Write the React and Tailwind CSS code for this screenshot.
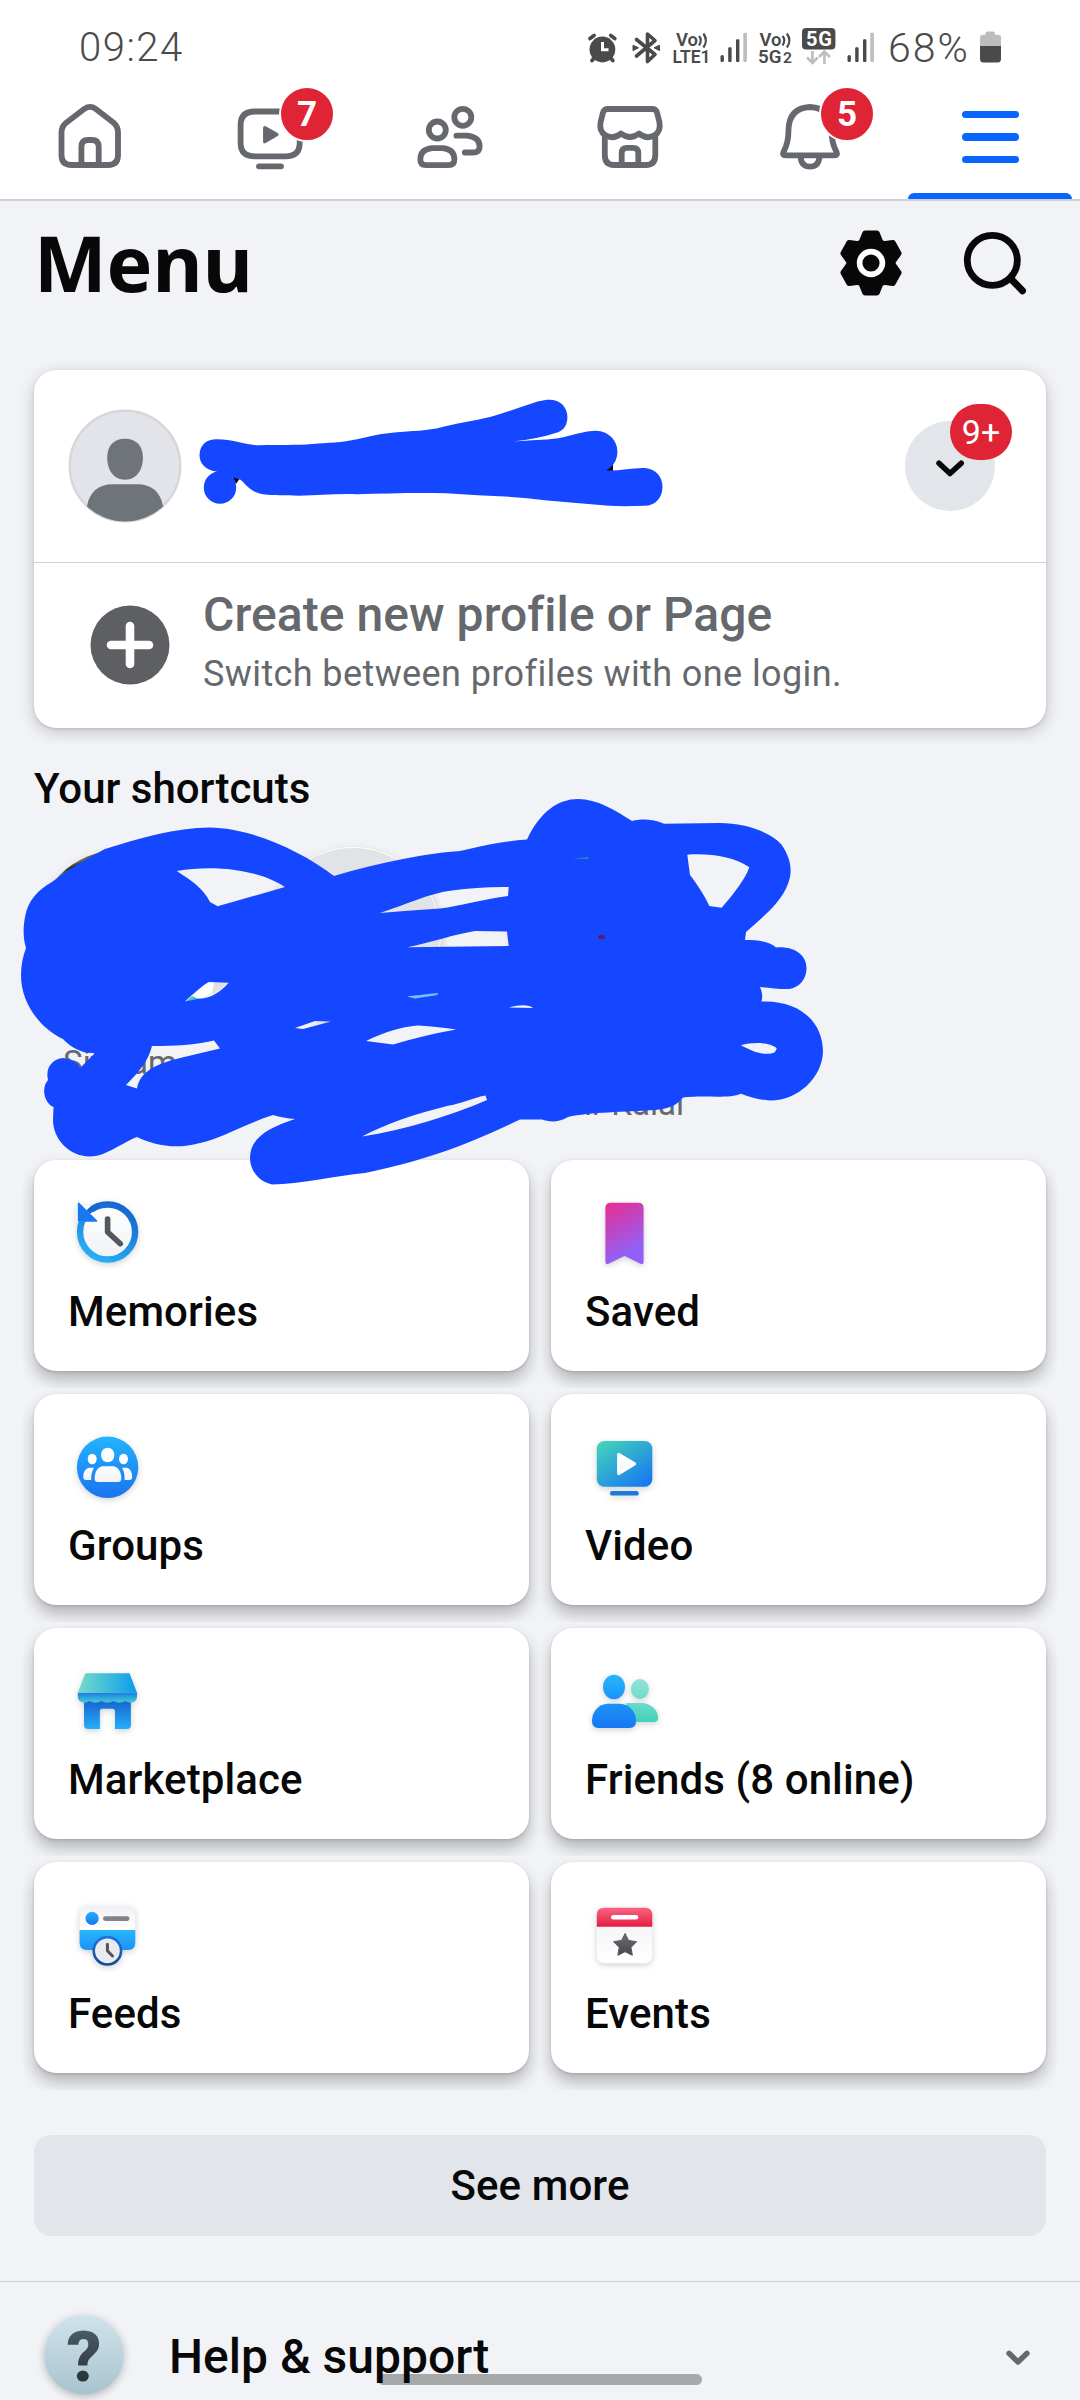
import React from "react";

const GRAY = "#65686c";
const INK = "#080809";
const MARKER = "#1447ff";

/* Status bar */

function StatusText({ x, y, size, weight = 600, width, children }) {
  return (
    <text
      x={x}
      y={y}
      fontFamily="Roboto, sans-serif"
      fontSize={size}
      fontWeight={weight}
      textLength={width}
      lengthAdjust="spacingAndGlyphs"
      fill="#4a4a4a"
    >
      {children}
    </text>
  );
}

function Signal({ x }) {
  return (
    <svg width="30" height="44" viewBox={`${x} 24 30 44`}>
      <g fill="#4a4a4a">
        <rect x={x + 1.5} y="55" width="3.4" height="7" rx="1.5" />
        <rect x={x + 9.2} y="47.3" width="3.4" height="14.7" rx="1" />
        <rect x={x + 17} y="39.3" width="3.4" height="22.7" rx="1" />
      </g>
      <rect x={x + 24.3} y="32.7" width="3.6" height="29.3" rx="1" fill="#bdbdbd" />
    </svg>
  );
}

function VoWaves({ x }) {
  return (
    <g fill="none" stroke="#4a4a4a" strokeWidth="2.2">
      <path d={`M${x} 36 Q${x + 3.6} 40 ${x} 45.5`} />
      <path d={`M${x + 4.4} 33.5 Q${x + 9.4} 40.5 ${x + 4.4} 47.5`} />
    </g>
  );
}

function StatusBar() {
  return (
    <div className="flex h-[68px] items-start justify-between pt-6 pr-[77px] pl-[79px]">
      <div className="mt-[2px] text-[40px] leading-[44px] tracking-[1.5px] text-[#4a4a4a] font-[350]">09:24</div>
      <div className="flex items-start">
        <svg width="42" height="44" viewBox="584 24 42 44">
          <circle cx="602.4" cy="49.5" r="12.9" fill="#4a4a4a" />
          <g stroke="#4a4a4a" strokeWidth="3.8" strokeLinecap="round">
            <path d="M590 38.5 L594 35.5 M614.8 38.5 L610.8 35.5" />
            <path d="M592 60.5 L595 57 M612.8 60.5 L609.8 57" />
          </g>
          <path d="M602.5 42 V49.8 H608.5" fill="none" stroke="#fff" strokeWidth="3" />
        </svg>
        <svg width="42" height="44" viewBox="626 24 42 44">
          <path
            d="M636.5 39.5 L655 54.5 L647.5 61.5 V34 L655 40.5 L636.5 56"
            fill="none"
            stroke="#4a4a4a"
            strokeWidth="3.6"
            strokeLinejoin="round"
            strokeLinecap="round"
          />
          <path d="M633 45.2 L638.5 47.8 L633 50.6 Z M659.5 45.2 L654 47.8 L659.5 50.6 Z" fill="#4a4a4a" stroke="#4a4a4a" />
        </svg>
        <svg width="51" height="44" viewBox="668 24 51 44">
          <StatusText x="676" y="46" size="18" width="22">Vo</StatusText>
          <VoWaves x={699} />
          <StatusText x="672.5" y="63.3" size="18.5" width="38">LTE1</StatusText>
        </svg>
        <Signal x={719} />
        <svg width="49" height="44" viewBox="749 24 49 44">
          <StatusText x="759.5" y="46" size="18" width="22">Vo</StatusText>
          <VoWaves x={782.5} />
          <StatusText x="758" y="63.3" size="18.5" width="23.5">5G</StatusText>
          <StatusText x="783" y="63.3" size="14.5" width="9">2</StatusText>
        </svg>
        <svg width="48" height="44" viewBox="798 24 48 44">
          <rect x="802" y="28" width="33.4" height="21.6" rx="4" fill="#4a4a4a" />
          <text x="806" y="45.6" fontFamily="Roboto, sans-serif" fontSize="20" fontWeight="700" fill="#fff" textLength="26">
            5G
          </text>
          <g fill="none" stroke="#bdbdbd" strokeWidth="2.6">
            <path d="M812.4 51 V62.5 M807 57.5 L812.4 63 L817.8 57.5" />
            <path d="M824.4 64 V52 M819 57 L824.4 51.6 L829.8 57" />
          </g>
        </svg>
        <Signal x={846.4} />
        <div className="mt-[2px] ml-3 w-[91px] text-[41px] leading-[44px] tracking-[2px] whitespace-nowrap text-[#4a4a4a] font-[350]">68%</div>
        <svg width="24" height="44" viewBox="979 24 24 44">
          <rect x="985.5" y="31.5" width="9.5" height="6" rx="2" fill="#bdbdbd" />
          <path d="M980 46 V38 Q980 34.7 983 34.7 H998 Q1001 34.7 1001 38 V46 Z" fill="#bdbdbd" />
          <path d="M980 46 H1001 V59 Q1001 62.5 997.5 62.5 H983.5 Q980 62.5 980 59 Z" fill="#4a4a4a" />
        </svg>
      </div>
    </div>
  );
}

/* Tab bar */

const HomeIcon = (
  <>
    <path d="M84.5 108.8 Q90 105 95.500 108.800 L113.300 122.500 Q118 126.300 118 132.500 V155 Q118 165 108 165 H71.500 Q61.500 165 61.500 155 V132.500 Q61.500 126.300 66.500 122.500 Z" />
    <path d="M81.400 165 V147 Q81.400 140 88 140 H92 Q98.700 140 98.700 147 V165" />
  </>
);

const VideoIcon = (
  <>
    <path d="M255 111.500 H285.500 Q299.700 111.500 299.700 125 V143 Q299.700 156.400 285.500 156.400 H255 Q240.600 156.400 240.600 143 V125 Q240.600 111.500 255 111.500 Z" />
    <path d="M259 166.300 H281" />
    <path d="M264.800 127.700 L276.800 134.500 L264.800 141.500 Z" fill={GRAY} strokeWidth="3.500" />
  </>
);

const FriendsIcon = (
  <>
    <circle cx="437.300" cy="130" r="8.500" />
    <circle cx="462.800" cy="117.300" r="8.500" />
    <path d="M432 148.200 H443 Q454.400 149.500 454.400 159.500 Q454.400 165.200 448.500 165.200 H426 Q420.300 165.200 420.300 159.500 Q420.300 149.500 432 148.200 Z" />
    <path d="M456.400 135.700 H467 Q479.600 137 479.600 146.500 Q479.600 152.500 473.500 152.500 H464.800" />
  </>
);

const StoreIcon = (
  <>
    <path d="M608 109 H652 Q656 109 657 112.500 L659.400 122 Q661 131 655 135 Q646.500 140 639 133.500 Q630 140.500 621 133.500 Q613.500 140 605 135 Q599 131 600.600 122 L603 112.500 Q604 109 608 109 Z" />
    <path d="M604.800 136 V155 Q604.800 165 614 165 H646 Q655.300 165 655.300 155 V136" />
    <path d="M621.700 165 V153 Q621.700 147.800 627 147.800 H633 Q638.300 147.800 638.300 153 V165" />
  </>
);

const BellIcon = (
  <>
    <path d="M810 107 Q789 108 788.500 130 Q788.500 143 783.500 152 Q782 155.300 785.500 155.300 H834.500 Q838 155.300 836.500 152 Q831.500 143 831.500 130 Q831 108 810 107 Z" />
    <path d="M800.500 157 Q801.500 166.700 810 166.700 Q818.500 166.700 819.500 157" />
  </>
);

const TABS = [
  { name: "Home", x: 90, icon: HomeIcon },
  { name: "Video", x: 270, icon: VideoIcon, badge: "7" },
  { name: "Friends", x: 450, icon: FriendsIcon },
  { name: "Marketplace", x: 630, icon: StoreIcon },
  { name: "Notifications", x: 810, icon: BellIcon, badge: "5" },
];

function TabBar() {
  return (
    <nav className="grid h-[133px] grid-cols-6 border-b-2 border-[#ced0d4]">
      {TABS.map((tab) => (
        <button key={tab.name} aria-label={tab.name} className="relative flex justify-center pt-6">
          <svg
            width="90"
            height="90"
            viewBox={`${tab.x - 45} 92 90 90`}
            fill="none"
            stroke={GRAY}
            strokeWidth="5.8"
            strokeLinecap="round"
            strokeLinejoin="round"
          >
            {tab.icon}
          </svg>
          {tab.badge && (
            <span className="absolute top-[18px] left-[99px] flex size-[56px] items-center justify-center rounded-full border-2 border-white bg-[#df2435] text-[35px] leading-none font-bold text-white">
              {tab.badge}
            </span>
          )}
        </button>
      ))}
      <button aria-label="Menu" className="flex flex-col items-center justify-between pt-[42.5px]">
        <span className="flex flex-col gap-[15.3px]">
          <span className="h-[7.4px] w-[57px] rounded-full bg-[#0866ff]" />
          <span className="h-[7.4px] w-[57px] rounded-full bg-[#0866ff]" />
          <span className="h-[7.4px] w-[57px] rounded-full bg-[#0866ff]" />
        </span>
        <span className="h-1.5 w-[164px] rounded-t-md bg-[#0866ff]" />
      </button>
    </nav>
  );
}

/* Page title */

const GEAR_POINTS = [0, 60, 120, 180, 240, 300]
  .flatMap((deg) => {
    const a = (deg * Math.PI) / 180;
    return [
      [-10, -20.8],
      [-6.2, -29.8],
      [6.2, -29.8],
      [10, -20.8],
    ].map(([x, y]) => `${((x * Math.cos(a) - y * Math.sin(a)) * 0.96).toFixed(2)},${(x * Math.sin(a) + y * Math.cos(a)).toFixed(2)}`);
  })
  .join(" ");

function TitleRow() {
  return (
    <div className="flex h-[169px] items-start justify-between pt-[22px] pr-[50px] pl-[34px]">
      <h1 className="font-['Noto_Sans'] text-[77px] leading-[80px] font-bold text-[#080809]">Menu</h1>
      <div className="mt-[6px] flex gap-[56px]">
        <svg width="66" height="68" viewBox="-33 -34 66 68">
          <polygon points={GEAR_POINTS} fill={INK} stroke={INK} strokeWidth="5.600" strokeLinejoin="round" />
          <circle r="11.400" fill="none" stroke="#fff" strokeWidth="5.600" />
        </svg>
        <svg width="70" height="68" viewBox="960 229 70 68" fill="none" stroke={INK} strokeLinecap="round">
          <circle cx="992.300" cy="260.300" r="25" strokeWidth="6.800" />
          <path d="M1012 280 L1022.500 290.700" strokeWidth="7" />
        </svg>
      </div>
    </div>
  );
}

/* Profile card */

function ProfileScribble() {
  return (
    <svg width="480" height="124" viewBox="190 394 480 124">
      <path d="M232 476 L240 478 L236 484 Z M596 464 H613 V472 H598 Z" fill="#0b0b0d" />
      <ellipse cx="220" cy="487.500" rx="16.200" ry="16.300" fill={MARKER} />
      <path
        fill={MARKER}
        d="M199.500 455 C200 444 207 439.300 216.500 439.300 C232 439 244 445 259 445.300 C280 444.500 296 445.500 312.500 444 C328 443 342 442.500 357 439.300 C368 437 377 434.500 388 433.300 C405 431 421 431.500 437.500 428.300 C456 423 473 421 491 416.700 C504 413 515 409 527 405 C536 402 543 399.500 550.400 399.700 C561 400 567.400 408 567.400 416.700 C567.400 425 564 430 558 432.300 C544 437 529 440 513 441.500 C529 440 544 440.500 558 438.300 C572 435.500 585 430.500 597 430.700 C610 432 617.400 441 617.400 451.700 C617.400 460 613 467 606 470.500 C620 471 633 467.500 645 468 C656 469 662.500 477 662.500 486.700 C662.500 498 655 505.700 645 505.700 C633 506 621 506.500 609 505.700 C581 503.500 554 501.500 527 498.300 C500 495.500 473 495.500 446 493.300 C416 492.500 387 493.500 357 494.300 C337 493.500 318 495.500 299 495.700 C285 495.500 275 495.500 263 494.300 C251 492 246 485 241 480 L232 477 L216 471.500 C206 470 199.500 464 199.500 455 Z"
      />
    </svg>
  );
}

function ProfileCard() {
  return (
    <section className="mx-[34px] h-[358px] rounded-[22px] bg-white shadow-[0_4px_16px_rgba(0,0,0,0.2),0_1px_3px_rgba(0,0,0,0.12)]">
      <div className="flex h-[193px] items-center border-b border-[#ced0d4] pl-[34px]">
        <svg width="114" height="114" viewBox="67.500 409 114 114">
          <clipPath id="avatar">
            <circle cx="124.500" cy="466" r="55.500" />
          </clipPath>
          <circle cx="124.500" cy="466" r="55.200" fill="#e2e4e9" stroke="#d6d7da" strokeWidth="2.500" />
          <g clipPath="url(#avatar)" fill="#6f7478">
            <path d="M124.500 438.700 C136 438.700 142.400 446 142.400 457.500 C142.400 470 136 479.700 124.500 479.700 C113 479.700 106.700 470 106.700 457.500 C106.700 446 113 438.700 124.500 438.700 Z" />
            <path d="M86.500 506 C89 492 98 484.300 112 484.300 H137 C151 484.300 160 492 162.500 506 V524 H86.500 Z" />
          </g>
        </svg>
        <div className="mt-[-20px] ml-2">
          <ProfileScribble />
        </div>
        <button aria-label="Switch profile" className="relative ml-[235px] flex size-[90px] items-center justify-center rounded-full bg-[#e2e5e9]">
          <svg width="34" height="22" viewBox="933 457 34 22" fill="none" stroke={INK} strokeWidth="5.500" strokeLinecap="round" strokeLinejoin="round" className="mt-1">
            <path d="M939 463.200 L950 473.600 L961.200 463.200" />
          </svg>
          <span className="absolute top-[-17px] left-[45px] flex h-14 w-[62px] items-center justify-center rounded-full bg-[#df2435] text-[34px] leading-none text-white">
            9+
          </span>
        </button>
      </div>
      <div className="flex h-[165px] pl-[56px]">
        <svg width="80" height="80" viewBox="-40 -40 80 80" className="mt-[42px]">
          <circle r="39.500" fill="#5d5f63" />
          <path d="M-19 0 H19 M0 -19 V19" stroke="#fff" strokeWidth="8.600" strokeLinecap="round" />
        </svg>
        <div className="mt-[23px] ml-[33px]">
          <div className="text-[48px] leading-[58px] font-medium tracking-[0.05px] whitespace-nowrap text-[#65686c]">Create new profile or Page</div>
          <div className="mt-[8px] text-[36px] leading-[44px] tracking-[0.4px] whitespace-nowrap text-[#65686c]">Switch between profiles with one login.</div>
        </div>
      </div>
    </section>
  );
}

/* Shortcuts */

function ShortcutsScribble() {
  return (
    <svg width="820" height="400" viewBox="10 790 820 400" className="pointer-events-none absolute top-[-40px] left-[10px] z-10">
      <path d="M185 1002 L209 982 H229 L200 999 Z" fill="#fff" />
      <path d="M214 982 H229 L212 995 Z" fill="#dfe0e5" />
      <path d="M184 1003 L192 996 L199 999 Z" fill="#3fc8c8" />
      <path d="M406 997 L438 992.500 L437 995 L415 999 Z" fill="#6fc4f2" />
      <path
        fill={MARKER}
        fillRule="evenodd"
        d="M52 882 C75 865 90 857 105 849 C140 838 175 828 210 827.500 C250 828 300 850 334 876 C380 862 430 853 460 851 C485 845 505 841 527 839.500 C540 812 558 799 578 799 C597 799 615 810 632 821 C642 818.500 653 819 664 823.700 L720 823 C745 823 770 832 781 844 C789 855 792 866 790 877 C785 900 765 915 746 932 L745 940 C757 940 769 941 776 947.500 C794 946 806.500 955 806.500 968 C806.500 981 797 989 787 989 C777 989 769 987.500 760 987 C762 992 763 996 761.500 1001.500 C800 1000 823 1022 823 1052 C822 1077 799 1100.500 770 1100.500 C760 1100 750 1097 741 1093.700 C730 1099 705 1095 683 1097.500 C676 1106 668 1109 655 1110 C625 1112 590 1112 568 1117 C555 1124 548 1121 542 1119.500 H520 C500 1129 480 1138 460 1145.700 C430 1157 395 1167 365 1173 C335 1176 300 1184 272 1184.500 C257 1181 250 1169 250 1158 C250 1138 268 1128 295 1119 C287 1118.500 280 1117 273 1115 C245 1124 220 1139 200 1143 C175 1150 154 1145 137 1137 C124 1142 111 1152 98 1155.500 C73 1161 53 1141 53 1120 L53.500 1107 C44 1103 41 1088 48 1080 C45 1067 53 1059 63 1058 C71 1059 77 1062 80 1068 L95 1053 C82 1054 70 1047 63 1039 C43 1030 21 1006 21 975 C21 965 23 956 26 948 C23 938 23 928 25 917 C28 900 38 890 52 882 Z
        M176.700 871 C215 864 260 870 285 887 L217.600 906.300 L210 902 C203 888 192 881 176.700 871 Z
        M380 913 C405 905 430 893 452 890.500 Q480 886.500 508.700 887 L508 896 C480 900 460 906 440 908.500 Q410 910.500 380 913 Z
        M407 947.300 C430 943 455 934 475 931 L507 931.500 L508.700 946 Z
        M185 1001.500 C194 993 203 985 209 982 L228.700 982.700 C219 994 207 999 200 998.500 Z
        M407 996.500 L438 993 L437 995 L415 998.500 Z
        M295 1028 L315 1021 L331 1021.500 L303 1029 Z
        M366 1041 C385 1032 400 1027 418 1025.500 Q440 1027 456 1029.500 Q425 1035 393 1044.500 Z
        M508.700 1007.500 Q527 1003 533 1008 Z
        M152 1046 C175 1046 195 1045 214 1040.500 L220 1048.500 L180 1058 C155 1064 140 1072 137 1088.500 L126 1085 C138 1073 148 1062 152 1046 Z
        M362 1136.500 C385 1124 415 1114 448 1105.700 C460 1104 472 1098 485.500 1095.500 L487 1100 C450 1116 405 1130 362 1136.500 Z
        M687.300 854.700 C710 853 735 857 749.300 867.300 C745 880 732 896 721.700 907.700 L709.300 906 C705 896 697 884 690 875 Z
        M741 1045.300 C752 1042 769 1042 776.700 1048 Q776 1053 771 1053.600 C759 1055 750 1050 741 1045.300 Z"
      />
      <path d="M572 858.500 L588 857 L589 859 Z" fill="#2a8f9c" />
      <ellipse cx="601.500" cy="937" rx="3.400" ry="2.200" fill="#5a1a6a" />
    </svg>
  );
}

function Shortcuts() {
  return (
    <section className="relative h-[324px]">
      <div className="flex gap-[57px] pt-[17px] pl-[32px]">
        <div className="w-[176px] text-center">
          <div className="mx-auto mt-[3px] size-[170px] rounded-full bg-[repeating-linear-gradient(160deg,#4b4a36_0px,#6d6a50_4px,#2c2d22_7px,#5b7f96_11px)] shadow-[0_4px_10px_rgba(0,0,0,0.2)]" />
          <div className="mt-[22px] text-[33px] leading-[41px] text-[#65686c]">Sitaram</div>
        </div>
        <div className="size-[176px] rounded-full border border-white bg-[#e2e3e7] shadow-[0_4px_10px_rgba(0,0,0,0.22)]" />
        <div className="ml-3 w-[174px]">
          <div className="mx-auto size-[172px] rounded-full bg-[#3d3d40] shadow-[0_4px_10px_rgba(0,0,0,0.15)]" />
          <div className="mt-[64px] text-right text-[33px] leading-[41px] text-[#65686c]">ir Kalal</div>
        </div>
      </div>
      <ShortcutsScribble />
    </section>
  );
}

/* Menu tiles */

function Gradients() {
  const stops = (a, b) => (
    <>
      <stop offset="0" stopColor={a} />
      <stop offset="1" stopColor={b} />
    </>
  );
  return (
    <svg width="0" height="0" className="absolute">
      <linearGradient id="ring" x1="0.700" y1="0" x2="0.200" y2="1">{stops("#1766cf", "#27b3f8")}</linearGradient>
      <linearGradient id="sky" x1="0" y1="0" x2="0" y2="1">{stops("#24b3fd", "#1a73f0")}</linearGradient>
      <linearGradient id="skyLight" x1="0" y1="0" x2="0" y2="1">{stops("#28b7fb", "#1c92fb")}</linearGradient>
      <linearGradient id="skyDeep" x1="0" y1="0" x2="0" y2="1">{stops("#1c92fb", "#1877f2")}</linearGradient>
      <linearGradient id="paper" x1="0" y1="0" x2="0" y2="1">{stops("#ffffff", "#f0f2f5")}</linearGradient>
      <linearGradient id="paperUp" x1="0" y1="0" x2="0" y2="1">{stops("#f0f1f4", "#ffffff")}</linearGradient>
      <linearGradient id="bookmark" x1="0.200" y1="0" x2="0.500" y2="0.850">{stops("#e42f96", "#9360f7")}</linearGradient>
      <linearGradient id="screen" x1="0" y1="0" x2="0.850" y2="1">{stops("#45d8b8", "#1877f2")}</linearGradient>
      <linearGradient id="roof" x1="0" y1="0" x2="1" y2="0">{stops("#76dccb", "#0a9cea")}</linearGradient>
      <linearGradient id="valance" x1="0" y1="0" x2="0" y2="1">{stops("#1b7be4", "#43cdd0")}</linearGradient>
      <linearGradient id="wall" x1="0" y1="0" x2="0" y2="1">{stops("#1763d0", "#25aef9")}</linearGradient>
      <linearGradient id="mintLight" x1="0" y1="0" x2="0" y2="1">{stops("#95e3d6", "#6ddcc9")}</linearGradient>
      <linearGradient id="mint" x1="0" y1="0" x2="0" y2="1">{stops("#6bdac8", "#42d1b9")}</linearGradient>
      <linearGradient id="red" x1="0" y1="0" x2="0" y2="1">{stops("#fb6482", "#e41e42")}</linearGradient>
      <linearGradient id="graphite" x1="0" y1="0" x2="0" y2="1">{stops("#6c6e73", "#45474b")}</linearGradient>
      <linearGradient id="clockRing" x1="0" y1="0" x2="0" y2="1">{stops("#1b74e4", "#174a94")}</linearGradient>
      <linearGradient id="help" x1="0" y1="0" x2="0" y2="1">{stops("#cfe3ec", "#a9c3ce")}</linearGradient>
      <linearGradient id="helpMark" x1="0" y1="0" x2="0" y2="1">{stops("#53676f", "#1d272d")}</linearGradient>
    </svg>
  );
}

const MemoriesArt = (
  <>
    <circle cx="107.600" cy="1232" r="27.500" fill="url(#paper)" stroke="url(#ring)" strokeWidth="6.400" />
    <path d="M76 1221.500 L77 1206 L90 1206 L97 1221.500 Z" fill="#fff" />
    <path d="M78.600 1203.300 L96.600 1221 H78.600 Z" fill="#1877f2" stroke="#1877f2" strokeWidth="1.600" strokeLinejoin="round" />
    <path d="M88.500 1212 Q93 1207 100 1205" fill="none" stroke="#1766cf" strokeWidth="5" />
    <path d="M107.600 1219 V1232 L120.300 1243.700" fill="none" stroke="#55575b" strokeWidth="5.600" strokeLinecap="round" strokeLinejoin="round" />
  </>
);

const SavedArt = (
  <path
    fill="url(#bookmark)"
    d="M611 1202.700 H638 Q643.600 1202.700 643.600 1208 V1262 Q643.600 1265 640.500 1263.800 L624.500 1256 L608.500 1263.800 Q605.400 1265 605.400 1262 V1208 Q605.400 1202.700 611 1202.700 Z"
  />
);

const GroupsArt = (
  <>
    <circle cx="107.600" cy="1467.300" r="30.700" fill="url(#sky)" />
    <g fill="#fff">
      <ellipse cx="107.700" cy="1455" rx="6.700" ry="7.300" />
      <ellipse cx="92.200" cy="1459" rx="4.500" ry="5.200" />
      <ellipse cx="123.500" cy="1459" rx="4.500" ry="5.200" />
    </g>
    <g fill="url(#paper)">
      <path d="M102 1466.300 H114 C119 1467.500 121.300 1473 121.300 1478.500 Q121.300 1482 118 1482 H98 Q94.600 1482 94.600 1478.500 C94.600 1473 97 1467.500 102 1466.300 Z" />
      <path d="M89 1467.700 H94 C91.800 1471 91 1475.500 91.200 1480 H86 Q83.300 1480 83.300 1477 C83.300 1472 85.500 1468.500 89 1467.700 Z" />
      <path d="M127 1467.700 H122 C124.200 1471 124.800 1475.500 124.600 1480 H129.500 Q132.200 1480 132.200 1477 C132.200 1472 130 1468.500 127 1467.700 Z" />
    </g>
  </>
);

const VideoArt = (
  <>
    <rect x="596.800" y="1441" width="55.500" height="45.700" rx="7.500" fill="url(#screen)" />
    <rect x="610" y="1491" width="28.800" height="4.600" rx="2.200" fill="#1c78dc" />
    <path d="M618.600 1454.300 L634.600 1463.900 L618.600 1473.600 Z" fill="url(#paper)" stroke="#fff" strokeWidth="3" strokeLinejoin="round" />
  </>
);

const MarketplaceArt = (
  <>
    <path d="M84 1700 H130.900 V1725 Q130.900 1729 127 1729 H115 V1711 Q115 1708.700 112.500 1708.700 H102.400 Q99.900 1708.700 99.900 1711 V1729 H88 Q84 1729 84 1725 Z" fill="url(#wall)" />
    <path d="M77.800 1692.500 H137 V1697 Q136.500 1702 131 1702.700 Q128 1702.500 125.500 1701 Q119.500 1704.500 113.500 1701 Q107.500 1704.500 101.500 1701 Q95.500 1704.500 89.500 1701 Q87 1702.500 84 1702.700 Q78.300 1702 77.800 1697 Z" fill="url(#valance)" />
    <path d="M85.400 1673.300 H129.500 L137 1692.700 H77.800 Z" fill="url(#roof)" />
  </>
);

const FriendsArt = (
  <>
    <ellipse cx="639.900" cy="1689" rx="9" ry="9.900" fill="url(#mintLight)" />
    <path d="M626 1703 H641 C651 1703 658 1710 658.200 1718 Q658.200 1722 653.500 1722 H630 Z" fill="url(#mint)" />
    <ellipse cx="614" cy="1687" rx="11" ry="12.200" fill="url(#skyLight)" />
    <path d="M608 1703.700 H620 C630 1704 636 1712 636.100 1721 Q636.100 1728 629.500 1728 H598.500 Q592 1728 592 1721 C592 1712 598 1704 608 1703.700 Z" fill="url(#skyDeep)" />
  </>
);

const FeedsArt = (
  <>
    <path d="M87 1906 H128 Q135.300 1906 135.300 1913.500 V1930 H79.600 V1913.500 Q79.600 1906 87 1906 Z" fill="url(#paperUp)" />
    <path d="M79.600 1930 H135.300 V1942.500 Q135.300 1950 128 1950 H87 Q79.600 1950 79.600 1942.500 Z" fill="url(#skyLight)" />
    <circle cx="92.100" cy="1918.400" r="6.600" fill="url(#sky)" />
    <rect x="103" y="1916.200" width="26.500" height="4.800" rx="2.400" fill="#808287" />
    <circle cx="107.400" cy="1950.800" r="13.700" fill="#e9ebf0" stroke="url(#clockRing)" strokeWidth="2.600" />
    <path d="M107.400 1944.300 V1950.800 L112.500 1956" fill="none" stroke="#505257" strokeWidth="3" strokeLinecap="round" strokeLinejoin="round" />
  </>
);

const EventsArt = (
  <>
    <rect x="596.800" y="1907.700" width="55.500" height="55.500" rx="7.500" fill="url(#paperUp)" />
    <path d="M596.800 1926.700 V1915 Q596.800 1907.700 604.300 1907.700 H644.800 Q652.300 1907.700 652.300 1915 V1926.700 Z" fill="url(#red)" />
    <rect x="611" y="1915" width="27.300" height="4.600" rx="2.300" fill="#fff" />
    <path
      d="M625.100 1933.500 L628.500 1940.400 L636.600 1941.700 L631 1947.400 L632.300 1955.300 L625.100 1951.700 L617.900 1955.300 L619.200 1947.400 L613.600 1941.700 L621.700 1940.400 Z"
      fill="url(#graphite)"
      stroke="#56585c"
      strokeWidth="1"
      strokeLinejoin="round"
    />
  </>
);

const TILES = [
  { label: "Memories", art: MemoriesArt, view: "70 1196 76 76" },
  { label: "Saved", art: SavedArt, view: "587 1196 76 76" },
  { label: "Groups", art: GroupsArt, view: "70 1430 76 76" },
  { label: "Video", art: VideoArt, view: "587 1430 76 76" },
  { label: "Marketplace", art: MarketplaceArt, view: "70 1664 76 76" },
  { label: "Friends (8 online)", art: FriendsArt, view: "587 1664 76 76" },
  { label: "Feeds", art: FeedsArt, view: "70 1898 76 76" },
  { label: "Events", art: EventsArt, view: "587 1898 76 76" },
];

function Tiles() {
  return (
    <div className="mx-[23px] grid grid-cols-2">
      {TILES.map((tile) => (
        <div key={tile.label} className="h-[234px] overflow-hidden px-[11px] pt-1.5">
          <div className="h-[211px] rounded-[22px] bg-white pt-9 pl-[34px] shadow-[0_9px_16px_rgba(0,0,0,0.26),0_1px_3px_rgba(0,0,0,0.14)]">
            <svg width="76" height="76" viewBox={tile.view} className="ml-[2px] overflow-visible drop-shadow-[0_2px_3px_rgba(0,0,0,0.18)]">
              {tile.art}
            </svg>
            <div className="mt-[15px] text-[42px] leading-[50px] font-medium tracking-[0.1px] text-[#080809]">{tile.label}</div>
          </div>
        </div>
      ))}
    </div>
  );
}

/* Footer rows */

function HelpRow() {
  return (
    <div className="relative flex h-[119px] items-start border-t border-[#ced0d4]">
      <div className="absolute top-[92px] left-[378px] h-[11px] w-[324px] rounded-full bg-[#a7a8aa]" />
      <svg width="90" height="90" viewBox="-45 -43 90 90" className="mt-[30px] ml-[39px] overflow-visible drop-shadow-[0_2px_4px_rgba(0,0,0,0.25)]">
        <circle r="39.600" fill="url(#help)" />
        <text x="0" y="26" textAnchor="middle" fontFamily="Roboto, sans-serif" fontWeight="800" fontSize="70" fill="url(#helpMark)">
          ?
        </text>
      </svg>
      <div className="relative mt-[47px] ml-[40px] text-[48px] leading-[56px] font-medium whitespace-nowrap text-[#080809]">Help &amp; support</div>
      <svg width="30" height="20" viewBox="1003 2347 30 20" fill="none" stroke={GRAY} strokeWidth="5.400" strokeLinecap="round" strokeLinejoin="round" className="mt-[65px] mr-[47px] ml-auto">
        <path d="M1009 2353.300 L1018 2362 L1027 2353.300" />
      </svg>
    </div>
  );
}

export default function App() {
  return (
    <div className="h-[2400px] w-[1080px] overflow-hidden bg-[#f2f3f7] font-['Roboto',sans-serif]">
      <Gradients />
      <header className="bg-white">
        <StatusBar />
        <TabBar />
      </header>
      <TitleRow />
      <ProfileCard />
      <h2 className="h-[102px] pt-[36px] pl-[34px] text-[42px] leading-[50px] font-medium text-[#080809]">Your shortcuts</h2>
      <Shortcuts />
      <Tiles />
      <button className="mx-[34px] mt-[45px] block h-[101px] w-[1012px] rounded-[17px] bg-[#e2e5e9] text-[42px] font-medium tracking-[0.1px] text-[#080809]">
        See more
      </button>
      <div className="h-[45px]" />
      <HelpRow />
    </div>
  );
}
